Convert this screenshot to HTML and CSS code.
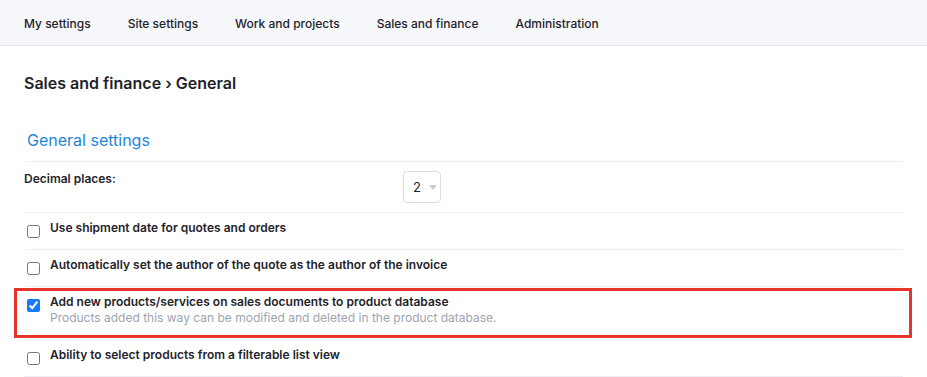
FILE: index.html
```html
<!DOCTYPE html>
<html lang="en">
<head>
  <meta charset="UTF-8" />
  <title>Sales and finance – General</title>
  <link rel="stylesheet" href="styles.css">
</head>
<body>
  <nav class="topnav">
    <a href="#" class="nav-link">My settings</a>
    <a href="#" class="nav-link">Site settings</a>
    <a href="#" class="nav-link">Work and projects</a>
    <a href="#" class="nav-link">Sales and finance</a>
    <a href="#" class="nav-link">Administration</a>
  </nav>

  <div class="page">
    <h1 class="crumbs">Sales and finance › General</h1>

    <h2 class="section-title">General settings</h2>

    <div class="settings">
      <div class="row row-field">
        <label class="field-label" for="decimals">Decimal places:</label>
        <div class="select" id="decimals">
          <span>2</span>
          <span class="caret"></span>
        </div>
      </div>

      <label class="row row-check">
        <input type="checkbox" />
        <span class="check-text">
          <span class="check-title">Use shipment date for quotes and orders</span>
        </span>
      </label>

      <label class="row row-check">
        <input type="checkbox" />
        <span class="check-text">
          <span class="check-title">Automatically set the author of the quote as the author of the invoice</span>
        </span>
      </label>

      <label class="row row-check highlight">
        <input type="checkbox" checked />
        <span class="check-text">
          <span class="check-title">Add new products/services on sales documents to product database</span>
          <span class="check-help">Products added this way can be modified and deleted in the product database.</span>
        </span>
      </label>

      <label class="row row-check">
        <input type="checkbox" />
        <span class="check-text">
          <span class="check-title">Ability to select products from a filterable list view</span>
        </span>
      </label>
    </div>
  </div>
</body>
</html>
```

FILE: styles.css
```css
html, body {
  margin: 0;
  padding: 0;
  background: #fff;
  color: #1f2329;
  font-family: Inter, "Noto Sans", sans-serif;
}
.topnav {
  display: flex;
  align-items: center;
  gap: 37px;
  height: 46px;
  padding: 2px 24px 0;
  box-sizing: border-box;
  background: #f6f7fb;
  border-bottom: 1px solid #e2e5ec;
}
.nav-link {
  color: #1f2329;
  font-size: 12px;
  font-weight: 500;
  line-height: 16px;
  text-decoration: none;
}
.page {
  padding: 0 24px;
}
.crumbs {
  margin: 0;
  padding-top: 27px;
  font-size: 16px;
  font-weight: 600;
  line-height: 20px;
}
.section-title {
  margin: 0;
  padding: 37px 0 11px 3px;
  color: #1f86d9;
  font-size: 16px;
  font-weight: 400;
  line-height: 20px;
  border-bottom: 1px solid #eceef3;
}
.row {
  display: flex;
  box-sizing: border-box;
  border-bottom: 1px solid #eceef3;
}
.row-field {
  align-items: flex-start;
  height: 51px;
}
.field-label {
  width: 379px;
  padding-top: 9px;
  font-size: 12px;
  font-weight: 600;
  line-height: 16px;
}
.select {
  display: flex;
  align-items: center;
  gap: 8px;
  box-sizing: border-box;
  width: 38px;
  height: 32px;
  margin-top: 9px;
  padding-left: 9px;
  border: 1px solid #d9dce6;
  border-radius: 4px;
  font-size: 13px;
}
.caret {
  width: 0;
  height: 0;
  border-left: 4px solid transparent;
  border-right: 4px solid transparent;
  border-top: 5px solid #c6cad4;
}
.row-check {
  align-items: flex-start;
  height: 37px;
  padding-top: 7px;
  cursor: pointer;
}
.row-check input {
  width: 13px;
  height: 13px;
  margin: 5px 10px 0 3px;
  accent-color: #1677ff;
}
.check-text {
  display: flex;
  flex-direction: column;
}
.check-title {
  font-size: 12px;
  font-weight: 600;
  line-height: 16px;
}
.check-help {
  color: #9ea4b1;
  font-size: 12px;
  line-height: 15px;
}
.highlight {
  position: relative;
  height: 53px;
}
.highlight::after {
  content: "";
  position: absolute;
  top: 1px;
  bottom: 1px;
  left: -10px;
  right: -9px;
  border: 3px solid #e8332a;
  pointer-events: none;
}
```
